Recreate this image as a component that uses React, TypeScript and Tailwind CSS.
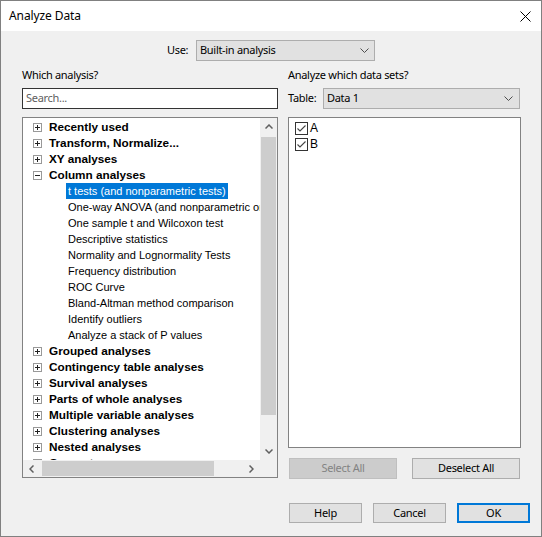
import React from 'react';

const childItems = [
    't tests (and nonparametric tests)',
    'One-way ANOVA (and nonparametric or mixed)',
    'One sample t and Wilcoxon test',
    'Descriptive statistics',
    'Normality and Lognormality Tests',
    'Frequency distribution',
    'ROC Curve',
    'Bland-Altman method comparison',
    'Identify outliers',
    'Analyze a stack of P values',
];

const groupsAfter = [
    'Grouped analyses',
    'Contingency table analyses',
    'Survival analyses',
    'Parts of whole analyses',
    'Multiple variable analyses',
    'Clustering analyses',
    'Nested analyses',
    'Generate curve',
];

function Chevron() {
    return (
        <svg width="9" height="5" viewBox="0 0 9 5" className="shrink-0">
            <polyline points="0.5,0.5 4.5,4.5 8.5,0.5" fill="none" stroke="#4d4d4d" strokeWidth="1" />
        </svg>
    );
}

function ExpandBox({ open }: { open?: boolean }) {
    return (
        <svg width="9" height="9" viewBox="0 0 9 9" className="shrink-0">
            <rect x="0.5" y="0.5" width="8" height="8" fill="#fff" stroke="#999" />
            <line x1="2" y1="4.5" x2="7" y2="4.5" stroke="#222" />
            {!open && <line x1="4.5" y1="2" x2="4.5" y2="7" stroke="#222" />}
        </svg>
    );
}

function GroupRow({ label, open }: { label: string; open?: boolean }) {
    return (
        <div className="h-[16px] flex items-center pl-[10px] whitespace-nowrap">
            <ExpandBox open={open} />
            <span className="ml-[7px] font-bold text-[11.75px] text-black">{label}</span>
        </div>
    );
}

function ArrowIcon({ dir }: { dir: 'up' | 'down' | 'left' | 'right' }) {
    const pts = {
        up: '0.5,4.5 4,1 7.5,4.5',
        down: '0.5,0.5 4,4 7.5,0.5',
        left: '4.5,0.5 1,4 4.5,7.5',
        right: '0.5,0.5 4,4 0.5,7.5',
    }[dir];
    const vertical = dir === 'up' || dir === 'down';
    return (
        <svg width={vertical ? 8 : 5} height={vertical ? 5 : 8} viewBox={vertical ? '0 0 8 5' : '0 0 5 8'}>
            <polyline points={pts} fill="none" stroke="#606060" strokeWidth="1.5" />
        </svg>
    );
}

function CheckRow({ label }: { label: string }) {
    return (
        <div className="h-[16px] flex items-center">
            <div className="w-[13px] h-[13px] border border-[#333] bg-white flex items-center justify-center">
                <svg width="11" height="11" viewBox="0 0 11 11">
                    <polyline points="1.5,5.5 4,8 9.5,2.5" fill="none" stroke="#444" strokeWidth="1.1" />
                </svg>
            </div>
            <span className="ml-[2px] text-[12px] text-black">{label}</span>
        </div>
    );
}

export default function App() {
    return (
        <div className="w-[542px] h-[537px] border border-[#808080] bg-[#f0f0f0] flex flex-col overflow-hidden font-['Noto_Sans',sans-serif] text-[11px] tracking-[-0.3px] text-black">
            {/* Title bar */}
            <div className="h-[30px] bg-white flex items-center justify-between pl-[8px] pr-[10px] shrink-0">
                <span className="text-[12px] tracking-[-0.1px]">Analyze Data</span>
                <svg width="11" height="11" viewBox="0 0 11 11">
                    <line x1="0.5" y1="0.5" x2="10.5" y2="10.5" stroke="#000" strokeWidth="1" />
                    <line x1="10.5" y1="0.5" x2="0.5" y2="10.5" stroke="#000" strokeWidth="1" />
                </svg>
            </div>

            <div className="flex flex-col pt-[9px]">
                {/* Use row */}
                <div className="flex items-center h-[21px] pl-[166px]">
                    <span className="w-[29px]">Use:</span>
                    <div className="w-[179px] h-[21px] border border-[#adadad] bg-[#e1e1e1] flex items-center justify-between pl-[3px] pr-[5px]">
                        <span>Built-in analysis</span>
                        <Chevron />
                    </div>
                </div>

                {/* Columns */}
                <div className="flex gap-[10px] pl-[21px] mt-[7px]">
                    <div className="w-[256px] flex flex-col">
                        <div className="h-[14px] leading-[14px]">Which analysis?</div>
                        <div className="mt-[6px] h-[21px] border border-[#333] bg-white flex items-center pl-[3px] text-[#5e5e5e]">
                            Search...
                        </div>
                        <div className="mt-[8px] h-[361px] border border-[#828282] bg-white flex flex-col font-['Liberation_Sans',Arial,sans-serif] tracking-normal">
                            <div className="flex h-[342px]">
                                <div className="w-[237px] overflow-hidden pt-[1px]">
                                    <GroupRow label="Recently used" />
                                    <GroupRow label="Transform, Normalize..." />
                                    <GroupRow label="XY analyses" />
                                    <GroupRow label="Column analyses" open />
                                    {childItems.map((item, i) => (
                                        <div key={item} className="h-[16px] flex items-center pl-[43px] whitespace-nowrap text-[11px]">
                                            <span className={i === 0 ? 'bg-[#0078d7] text-white px-[2px] leading-[16px]' : 'px-[2px] leading-[16px] text-black'}>
                                                {item}
                                            </span>
                                        </div>
                                    ))}
                                    {groupsAfter.map((g) => (
                                        <GroupRow key={g} label={g} />
                                    ))}
                                </div>
                                {/* Vertical scrollbar */}
                                <div className="w-[17px] bg-[#f0f0f0] flex flex-col">
                                    <div className="h-[17px] flex items-center justify-center">
                                        <ArrowIcon dir="up" />
                                    </div>
                                    <div className="mt-[2px] mx-[1px] h-[278px] bg-[#cdcdcd]" />
                                    <div className="flex-1" />
                                    <div className="h-[17px] flex items-center justify-center">
                                        <ArrowIcon dir="down" />
                                    </div>
                                </div>
                            </div>
                            <div className="flex h-[17px]">
                                {/* Horizontal scrollbar */}
                                <div className="w-[237px] bg-[#f0f0f0] flex items-center">
                                    <div className="w-[17px] h-[17px] flex items-center justify-center">
                                        <ArrowIcon dir="left" />
                                    </div>
                                    <div className="ml-[2px] w-[172px] h-[15px] bg-[#cdcdcd]" />
                                    <div className="flex-1" />
                                    <div className="w-[17px] h-[17px] flex items-center justify-center">
                                        <ArrowIcon dir="right" />
                                    </div>
                                </div>
                                <div className="w-[17px] bg-[#f0f0f0]" />
                            </div>
                        </div>
                    </div>

                    <div className="w-[233px] flex flex-col">
                        <div className="h-[14px] leading-[14px]">Analyze which data sets?</div>
                        <div className="mt-[6px] h-[21px] flex items-center">
                            <span className="w-[35px]">Table:</span>
                            <div className="w-[197px] h-[21px] border border-[#adadad] bg-[#e1e1e1] flex items-center justify-between pl-[3px] pr-[6px]">
                                <span>Data 1</span>
                                <Chevron />
                            </div>
                        </div>
                        <div className="mt-[8px] h-[331px] border border-[#828282] bg-white pt-[2px] pl-[6px] font-['Liberation_Sans',Arial,sans-serif] tracking-normal">
                            <CheckRow label="A" />
                            <CheckRow label="B" />
                        </div>
                        <div className="mt-[10px] flex gap-[15px] pl-[1px]">
                            <button className="w-[108px] h-[21px] border border-[#bfbfbf] bg-[#cccccc] text-[#838383]">
                                Select All
                            </button>
                            <button className="w-[108px] h-[21px] border border-[#adadad] bg-[#e1e1e1]">
                                Deselect All
                            </button>
                        </div>
                    </div>
                </div>

                {/* Bottom buttons */}
                <div className="mt-[24px] pl-[288px] flex gap-[11px]">
                    <button className="w-[73px] h-[20px] border border-[#adadad] bg-[#e1e1e1]">Help</button>
                    <button className="w-[73px] h-[20px] border border-[#adadad] bg-[#e1e1e1]">Cancel</button>
                    <button className="w-[73px] h-[20px] border-2 border-[#0078d7] bg-[#e1e1e1]">OK</button>
                </div>
            </div>
        </div>
    );
}
